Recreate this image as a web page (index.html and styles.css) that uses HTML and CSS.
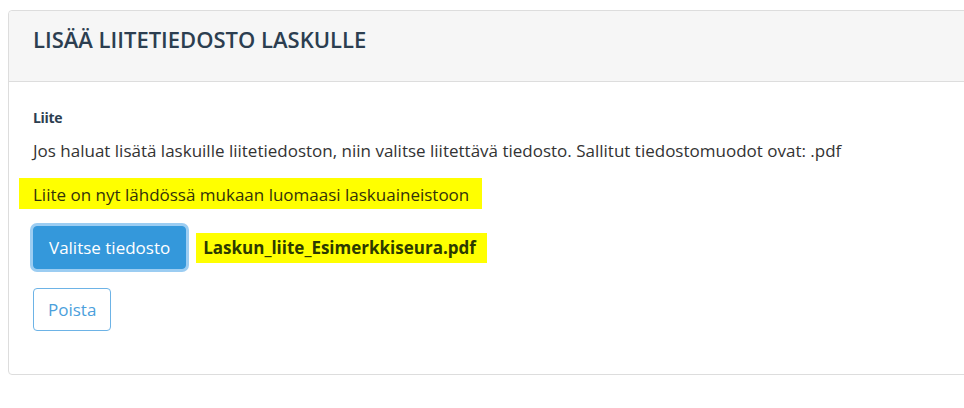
FILE: index.html
```html
<!DOCTYPE html>
<html lang="fi">
<head>
<meta charset="utf-8">
<link rel="stylesheet" href="styles.css">
</head>
<body>
<div class="panel">
  <div class="panel-heading">
    <h3 class="panel-title">Lisää liitetiedosto laskulle</h3>
  </div>
  <div class="panel-body">
    <label class="field-label">Liite</label>
    <p class="help">Jos haluat lisätä laskuille liitetiedoston, niin valitse liitettävä tiedosto. Sallitut tiedostomuodot ovat: .pdf</p>
    <p class="status"><span class="marker">Liite on nyt lähdössä mukaan luomaasi laskuaineistoon</span></p>
    <div class="file-row">
      <button class="btn btn-primary">Valitse tiedosto</button>
      <span class="file-name">Laskun_liite_Esimerkkiseura.pdf</span>
    </div>
    <button class="btn btn-outline">Poista</button>
  </div>
</div>
</body>
</html>
```
FILE: styles.css
```css
html, body {
  margin: 0;
  padding: 0;
  background: #fff;
  overflow: hidden;
}
body {
  font-family: "Open Sans", "Liberation Sans", sans-serif;
  font-size: 17px;
  color: #333;
  padding: 10px 0 0 8px;
}
.panel {
  width: 1000px;
  border: 1px solid #ddd;
  border-radius: 4px;
  background: #fff;
}
.panel-heading {
  background: #f6f6f6;
  border-bottom: 1px solid #ddd;
  border-radius: 4px 4px 0 0;
  padding: 16px 24px 30px;
}
.panel-title {
  margin: 0;
  font-size: 22px;
  line-height: 24px;
  font-weight: 600;
  text-transform: uppercase;
  color: #2c3e50;
}
.panel-body {
  padding: 26px 24px 43px;
}
.field-label {
  display: block;
  font-size: 14px;
  line-height: 20px;
  font-weight: 700;
  letter-spacing: -0.3px;
  color: #2c3e50;
}
.help {
  margin: 12px 0 0;
  line-height: 21px;
}
.status {
  margin: 23px 0 0;
  line-height: 21px;
}
.marker {
  display: inline-block;
  background: #ffff00;
  color: #33330a;
  margin-left: -14px;
  padding: 0 13px 0 14px;
  box-shadow: 0 -6px 0 #ffff00, 0 4px 0 #ffff00;
}
.file-row {
  display: flex;
  align-items: center;
  margin-top: 21px;
}
.btn {
  font-family: inherit;
  font-size: 17px;
  line-height: 21px;
  padding: 10px 14px;
  border-radius: 4px;
  cursor: pointer;
}
.btn-primary {
  background: #3498db;
  border: 1px solid #3498db;
  color: #fff;
  padding: 10px 15px;
  box-shadow: 0 0 0 3px #9ccdf2;
}
.file-name {
  margin-left: 10px;
  padding: 4px 11px 4px 7px;
  line-height: 22px;
  background: #ffff00;
  font-weight: 700;
  color: #2c3a00;
}
.btn-outline {
  display: block;
  margin-top: 19px;
  background: #fff;
  border: 1px solid #6db3e6;
  color: #4ba0dc;
}
```
